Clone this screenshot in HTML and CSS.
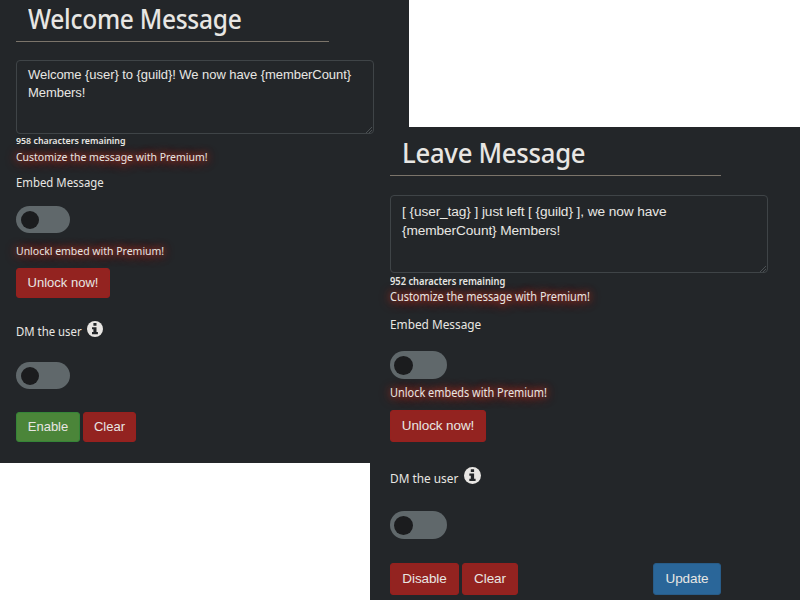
FILE: index.html
```html
<!DOCTYPE html>
<html lang="en">
<head>
<meta charset="utf-8">
<title>Server messages</title>
<link rel="stylesheet" href="styles.css">
</head>
<body>
<main class="stage">
  <section class="panel welcome">
    <h2 class="title"><span class="narrow">Welcome Message</span></h2>
    <div class="message">Welcome {user} to {guild}! We now have {memberCount}<br>Members!<svg class="grip" viewBox="0 0 8 8"><path d="M0 8L8 0M4 8L8 4"/></svg></div>
    <p class="remaining"><span class="narrow">958 characters remaining</span></p>
    <p class="premium customize"><span class="narrow">Customize the message with Premium!</span></p>
    <p class="label embed"><span class="narrow">Embed Message</span></p>
    <div class="toggle"><span class="knob"></span></div>
    <p class="premium unlock"><span class="narrow">Unlockl embed with Premium!</span></p>
    <button class="btn red wide">Unlock now!</button>
    <p class="label dm"><span class="narrow">DM the user</span><svg class="info" viewBox="0 0 16 16"><circle cx="8" cy="8" r="8"/><path d="M6.4 2h3.1v2.8H6.4zM5 6.2h4.5v4.9h1.4v2.1H5v-2.1h1.4V8.2H5z"/></svg></p>
    <div class="toggle"><span class="knob"></span></div>
    <div class="actions"><button class="btn green">Enable</button><button class="btn red clear">Clear</button></div>
  </section>
  <section class="panel leave">
    <h2 class="title"><span class="narrow">Leave Message</span></h2>
    <div class="message">[ {user_tag} ] just left [ {guild} ], we now have<br>{memberCount} Members!<svg class="grip" viewBox="0 0 8 8"><path d="M0 8L8 0M4 8L8 4"/></svg></div>
    <p class="remaining"><span class="narrow">952 characters remaining</span></p>
    <p class="premium customize"><span class="narrow">Customize the message with Premium!</span></p>
    <p class="label embed"><span class="narrow">Embed Message</span></p>
    <div class="toggle"><span class="knob"></span></div>
    <p class="premium unlock"><span class="narrow">Unlock embeds with Premium!</span></p>
    <button class="btn red wide">Unlock now!</button>
    <p class="label dm"><span class="narrow">DM the user</span><svg class="info" viewBox="0 0 16 16"><circle cx="8" cy="8" r="8"/><path d="M6.4 2h3.1v2.8H6.4zM5 6.2h4.5v4.9h1.4v2.1H5v-2.1h1.4V8.2H5z"/></svg></p>
    <div class="toggle"><span class="knob"></span></div>
    <div class="actions"><button class="btn red">Disable</button><button class="btn red clear">Clear</button><button class="btn blue">Update</button></div>
  </section>
</main>
</body>
</html>
```
FILE: styles.css
```css
* { box-sizing: border-box; }
body { margin: 0; background: #fff; }
p, h2 { margin: 0; white-space: nowrap; }
.stage {
  display: grid;
  grid-template-columns: 370px 39px 391px;
  grid-template-rows: 127px 336px 137px;
  width: 800px;
  height: 600px;
  overflow: hidden;
}
.panel {
  display: flex;
  flex-direction: column;
  align-items: flex-start;
  background: #232629;
  color: #e8e6e3;
}
.welcome { grid-column: 1 / 3; grid-row: 1 / 3; padding-left: 16px; }
.leave { grid-column: 2 / 4; grid-row: 2 / 4; padding-left: 20px; }

.narrow { display: inline-block; transform: scaleX(0.91); transform-origin: left center; }
.title {
  width: 313px;
  height: 42px;
  padding-left: 12px;
  border-bottom: 1px solid #7b746a;
  font: 500 26.5px/39px "Noto Sans", sans-serif;
  letter-spacing: -0.3px;
}
.title .narrow { transform: scaleX(0.925); }
.message {
  position: relative;
  width: 358px;
  height: 74px;
  margin-top: 18px;
  padding: 5px 11px;
  border: 1px solid #3f4447;
  border-radius: 4px;
  font: 13px/18px "Liberation Sans", sans-serif;
  letter-spacing: -0.06px;
  white-space: nowrap;
}
.grip {
  position: absolute;
  right: 1px;
  bottom: 0;
  width: 6px;
  height: 6px;
  stroke: #5a5f61;
}
.remaining { height: 14px; font: 600 9.5px/14px "Noto Sans", sans-serif; }
.remaining .narrow { transform: scaleX(0.93); }
.premium { height: 18px; font: 11.5px/18px "Noto Sans", sans-serif; text-shadow: 0 0 8px #d0301c, 0 1px 12px #c0281c; }
.label { height: 20px; font: 12.5px/20px "Noto Sans", sans-serif; }
.embed { margin: 7px 0 13px; }
.toggle {
  display: flex;
  align-items: center;
  width: 54px;
  height: 27px;
  padding-left: 5px;
  border-radius: 14px;
  background: #60686b;
}
.knob { width: 18px; height: 18px; border-radius: 50%; background: #1b1c1e; }
.unlock { margin: 9px 0 8px; }
.btn {
  width: 64px;
  height: 30px;
  padding: 0;
  border: 1px solid transparent;
  border-radius: 3px;
  color: #e8e6e3;
  font: 13px/26px "Liberation Sans", sans-serif;
}
.red { background: #932320; border-color: #97201e; }
.green { background: #4b8539; border-color: #358437; }
.blue { background: #2a6699; border-color: #285c88; }
.wide { width: 94px; }
.dm { display: flex; margin: 23px 0 21px; }
.dm .narrow { line-height: 22px; }
.info { width: 16px; height: 16px; margin-left: -1px; fill: #e8e6e3; }
.info path { fill: #232629; }
.actions { display: flex; gap: 3px; margin-top: 23px; }
.clear { width: 53px; }

.leave .title { width: 331px; height: 49px; font-size: 27.5px; line-height: 51px; }
.leave .title .narrow { transform: scaleX(0.935); }
.leave .message { width: 378px; height: 78px; margin-top: 19px; padding-top: 6px; font-size: 13.7px; line-height: 19px; letter-spacing: -0.1px; }
.leave .remaining { height: 16px; font-size: 10px; line-height: 16px; }
.leave .premium { font-size: 12px; line-height: 17px; }
.leave .customize { line-height: 15px; }
.leave .label { font-size: 13px; }
.leave .embed { margin: 8px 0 16px; line-height: 18px; }
.leave .toggle { width: 57px; height: 28px; padding-left: 4px; }
.leave .knob { width: 19px; height: 19px; }
.leave .unlock { margin: 5px 0 8px; }
.leave .btn { height: 32px; font-size: 13.5px; line-height: 30px; width: 69px; letter-spacing: -0.1px; }
.leave .btn.wide { width: 96px; }
.leave .btn.clear { width: 56px; }
.leave .btn.blue { width: 68px; margin-left: 132px; }
.leave .dm { margin: 25px 0 24px; }
.leave .info { width: 17px; height: 17px; }
.leave .actions { margin-top: 24px; }
```
